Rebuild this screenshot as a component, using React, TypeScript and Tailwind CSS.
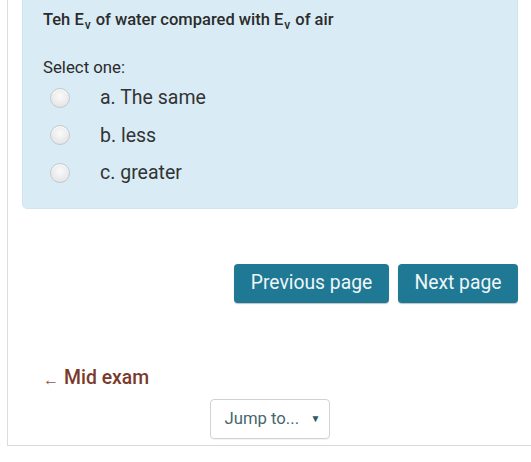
import React from "react";

function Radio() {
  return (
    <span className="inline-block w-[20px] h-[20px] rounded-full border border-[#c4c8cb] bg-[radial-gradient(circle_at_50%_40%,#fafafa_0%,#e6e7e8_70%,#d4d6d8_100%)] shadow-[inset_0_1px_1px_rgba(255,255,255,0.8)]" />
  );
}

export default function App() {
  const opts = ["a. The same", "b. less", "c. greater"];
  return (
    <div className="w-[531px] h-[462px] bg-white font-['Roboto',sans-serif] text-[#333]">
      <div className="ml-[7px] h-[446px] border-l border-b border-[#dcdcdc] flex flex-col">
        <div className="ml-[14px] mr-[13px] bg-[#d9ecf6] rounded-b-[5px] border border-t-0 border-[#cfe5f0] pt-[9px] pb-[16px] px-[20px]">
          <div className="h-[22px] leading-[22px] text-[16.5px] font-medium text-[#2b2b2b]">
            Teh E<sub className="text-[12px] relative top-[4px] ml-[1px] mr-[5px]">v</sub>of water compared with E<sub className="text-[12px] relative top-[4px] ml-[1px] mr-[5px]">v</sub>of air
          </div>
          <div className="mt-[25px] h-[22px] leading-[22px] text-[16.8px] text-[#2b2b2b]">Select one:</div>
          <div className="mt-[1px] flex flex-col">
            {opts.map((o) => (
              <div key={o} className="h-[37.5px] flex items-center">
                <span className="ml-[7px] flex items-center"><Radio /></span>
                <span className="ml-[30px] text-[19.5px] text-[#333]">{o}</span>
              </div>
            ))}
          </div>
        </div>
        <div className="mt-[55px] mr-[13px] flex justify-end gap-[9px]">
          <button className="w-[155px] h-[39px] rounded-[4px] bg-[#1f7894] text-[#eef6f8] text-[19.3px] shadow-[0_1px_1px_rgba(0,0,0,0.25)]">Previous page</button>
          <button className="w-[120px] h-[39px] rounded-[4px] bg-[#1f7894] text-[#eef6f8] text-[19.3px] shadow-[0_1px_1px_rgba(0,0,0,0.25)]">Next page</button>
        </div>
        <div className="mt-[63px] ml-[35px] h-[24px] flex items-center text-[#7a3a2b]">
          <span className="text-[16px] mt-[4px] text-[#8a5a4e]">←</span>
          <span className="ml-[5px] text-[19.4px] font-medium">Mid exam</span>
        </div>
        <div className="mt-[9px] flex justify-center">
          <div className="w-[120px] h-[40px] rounded-[4px] border border-[#cfd3d6] flex items-center pl-[14px] pr-[8px] text-[16.7px] text-[#466670] shadow-[0_1px_1px_rgba(0,0,0,0.05)]">
            <span>Jump to...</span>
            <span className="ml-auto text-[10px] text-[#2b5966]">▼</span>
          </div>
        </div>
      </div>
    </div>
  );
}
